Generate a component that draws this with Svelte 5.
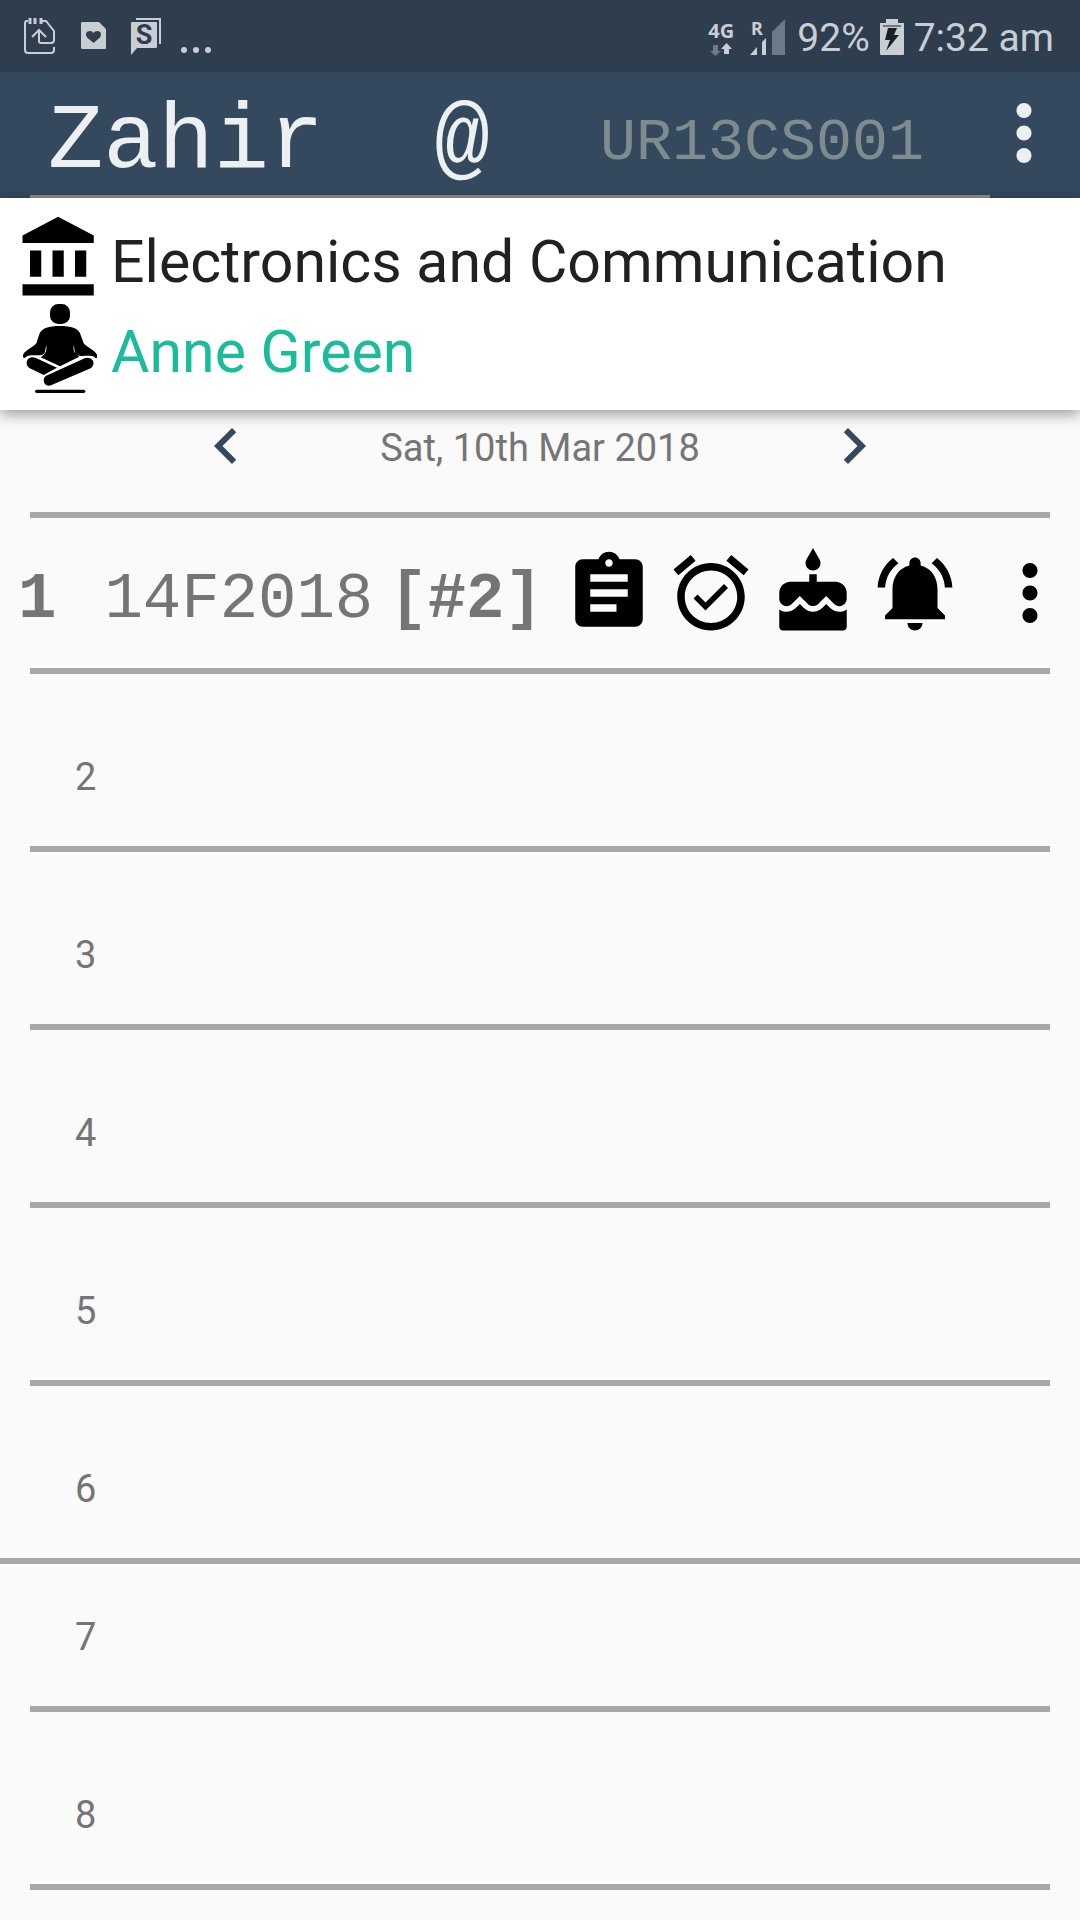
<script>
  const actions = [
    { label: 'Assignments', d: 'M19 3h-4.18C14.4 1.84 13.3 1 12 1c-1.3 0-2.4.84-2.82 2H5c-1.1 0-2 .9-2 2v14c0 1.1.9 2 2 2h14c1.1 0 2-.9 2-2V5c0-1.1-.9-2-2-2zm-7 0c.55 0 1 .45 1 1s-.45 1-1 1-1-.45-1-1 .45-1 1-1zm2 14H7v-2h7v2zm3-4H7v-2h10v2zm0-4H7V7h10v2z' },
    { label: 'Alarm', d: 'M22 5.72l-4.6-3.86-1.29 1.53 4.6 3.86L22 5.72zM7.88 3.39L6.6 1.86 2 5.71l1.29 1.53 4.59-3.85zM12 4c-4.97 0-9 4.03-9 9s4.02 9 9 9c4.97 0 9-4.03 9-9s-4.03-9-9-9zm0 16c-3.87 0-7-3.13-7-7s3.13-7 7-7 7 3.13 7 7-3.13 7-7 7zm-1.46-5.47L8.41 12.4l-1.06 1.06 3.18 3.18 6-6-1.06-1.06-4.93 4.95z' },
    { label: 'Birthdays', d: 'M12 6c1.11 0 2-.9 2-2 0-.38-.1-.73-.29-1.03L12 0l-1.71 2.97c-.19.3-.29.65-.29 1.03 0 1.1.9 2 2 2zm4.6 9.99l-1.07-1.07-1.08 1.07c-1.3 1.3-3.58 1.31-4.89 0l-1.07-1.07-1.09 1.07C6.75 16.64 5.88 17 4.96 17c-.73 0-1.4-.23-1.96-.61V21c0 .55.45 1 1 1h16c.55 0 1-.45 1-1v-4.61c-.56.38-1.23.61-1.96.61-.92 0-1.79-.36-2.44-1.01zM18 9h-5V7h-2v2H6c-1.66 0-3 1.34-3 3v1.54c0 1.08.88 1.96 1.96 1.96.52 0 1.02-.2 1.38-.57l2.14-2.13 2.13 2.13c.74.74 2.03.74 2.77 0l2.14-2.13 2.13 2.13c.37.37.86.57 1.38.57 1.08 0 1.96-.88 1.96-1.96V12C21 10.34 19.66 9 18 9z' },
    { label: 'Notifications', d: 'M7.58 4.08L6.15 2.65C3.75 4.48 2.17 7.3 2.03 10.5h2c.15-2.65 1.51-4.97 3.55-6.42zm12.39 6.42h2c-.15-3.2-1.73-6.02-4.12-7.85l-1.42 1.43c2.02 1.45 3.39 3.77 3.54 6.42zM18 11c0-3.07-1.64-5.64-4.5-6.32V4c0-.83-.67-1.5-1.5-1.5s-1.5.67-1.5 1.5v.68C7.63 5.36 6 7.92 6 11v5l-2 2v1h16v-1l-2-2v-5zm-6 11c.14 0 .27-.01.4-.04.65-.14 1.18-.58 1.44-1.18.1-.24.15-.5.15-.78h-4c.01 1.1.9 2 2.01 2z' }
  ];
  const periods = [2, 3, 4, 5, 6, 7, 8];
  const more = 'M12 8c1.1 0 2-.9 2-2s-.9-2-2-2-2 .9-2 2 .9 2 2 2zm0 2c-1.1 0-2 .9-2 2s.9 2 2 2 2-.9 2-2-.9-2-2-2zm0 6c-1.1 0-2 .9-2 2s.9 2 2 2 2-.9 2-2-.9-2-2-2z';
</script>

<div class="screen">
  <div class="status">
    <div class="notices">
      <svg class="glyph" viewBox="0 0 36 42" fill="none" stroke="currentColor" stroke-width="2">
        <path d="M6 5H5Q3 5 3 7V34Q3 37 6 37H29Q32 37 32 34V31M19 5H24L32 15V24Q32 27 29 27H19Q17 27 17 25V15M10 21L17 14L24 21" />
        <path d="M8 2V8M13 2V8M19 2V8" stroke-width="3" />
      </svg>
      <svg class="glyph" viewBox="0 0 36 42" fill="currentColor" fill-rule="evenodd">
        <path d="M8 6H24L31 13V32Q31 33 30 33H8Q6 33 6 32V7Q6 6 8 6ZM18.500 27L25 21.500Q28 15 22 15Q19.500 15 18.500 17Q17.500 15 15 15Q9 15 12 21.500Z" />
      </svg>
      <svg class="glyph" viewBox="0 0 36 42">
        <path d="M8 3H32V28" fill="none" stroke="currentColor" stroke-width="2" />
        <path d="M3 7Q3 6 4 6H28Q29 6 29 7V31Q29 32 28 32H9L3 39Z" fill="currentColor" />
        <text x="16" y="28" class="s-mark">S</text>
      </svg>
      <svg class="glyph" viewBox="0 0 36 42" fill="currentColor"><circle cx="3" cy="34" r="3" /><circle cx="15" cy="34" r="3" /><circle cx="27" cy="34" r="3" /></svg>
    </div>
    <div class="system">
      <div class="net">
        <span class="net-text">4G</span>
        <svg viewBox="0 0 28 14">
          <path d="M6 2H11V8H14L8.500 13L3 8H6Z" fill="#6c7a89" />
          <path d="M17 11V6H14L19.500 0L25 6H22V11Z" fill="currentColor" />
        </svg>
      </div>
      <svg class="signal" viewBox="0 0 38 42" fill="currentColor">
        <text x="2" y="18" class="r-text">R</text>
        <path d="M1 38L8 30V38ZM13 38V25L17 21V38Z" />
        <path d="M23 38V15L36 2V38Z" fill="#6c7a89" />
      </svg>
      <span>92%</span>
      <svg class="battery" viewBox="0 0 24 42">
        <path d="M6 2H18V6H24V37Q24 38 23 38H1Q0 38 0 37V6H6Z" fill="currentColor" />
        <path d="M3 9H21" stroke="#6c7a89" stroke-width="2" />
        <path d="M8 11H17L14 18H19L6 34L10 23H5Z" fill="#1c2126" />
      </svg>
      <span>7:32 am</span>
    </div>
  </div>

  <header>
    <div class="identity">
      <h1>Zahir</h1>
      <span class="at">@</span>
      <span class="code">UR13CS001</span>
    </div>
    <button class="icon-button" aria-label="More options"><svg viewBox="0 0 24 24"><path d={more} /></svg></button>
  </header>

  <section class="card">
    <div class="line">
      <svg viewBox="0 0 24 24"><path d="M4 10v7h3v-7H4zm6 0v7h3v-7h-3zM2 22h19v-3H2v3zm14-12v7h3v-7h-3zm-4.500-9L2 6v2h19V6l-9.500-5z" /></svg>
      <span>Electronics and Communication</span>
    </div>
    <div class="line teacher">
      <svg viewBox="45 309 270 270">
        <rect x="150" y="312" width="60" height="60" rx="25" />
        <path d="M179 378C215 378 233 384 240 400L251 430C259 441 280 447 291 464V473Q287 478 283 470C266 463 235 474 226 461L221 436C219 450 222 461 238 470L180 499L122 472C138 463 141 450 139 436L134 458C126 473 95 460 78 470Q73 477 69 471V464C80 447 101 441 109 430L119 400C127 384 145 378 179 378Z" />
        <path d="M106 473L171 503L131 525L88 504Q77 495 81 482Q88 468 106 473Z" />
        <path d="M137 528L254 475Q271 469 279 482Q284 495 272 505L153 556Q138 561 132 547Q129 535 137 528Z" />
        <rect x="105" y="569" width="151" height="10" rx="5" />
      </svg>
      <span>Anne Green</span>
    </div>
  </section>

  <nav class="day">
    <button class="chevron" aria-label="Previous day"><svg viewBox="0 0 24 24"><path d="M15.410 7.410L14 6l-6 6 6 6 1.410-1.410L10.830 12z" /></svg></button>
    <time datetime="2018-03-10">Sat, 10th Mar 2018</time>
    <button class="chevron" aria-label="Next day"><svg viewBox="0 0 24 24"><path d="M10 6L8.590 7.410 13.170 12l-4.580 4.590L10 18l6-6z" /></svg></button>
  </nav>

  <ol>
    <li class="current">
      <div class="entry">
        <b>1</b>
        <span class="course">14F2018</span>
        <b class="count">[#2]</b>
      </div>
      <div class="actions">
        {#each actions as a}
          <button class="icon-button" aria-label={a.label}><svg viewBox="0 0 24 24"><path d={a.d} /></svg></button>
        {/each}
      </div>
      <button class="icon-button row-more" aria-label="Period options"><svg viewBox="0 0 24 24"><path d={more} /></svg></button>
    </li>
    {#each periods as p}
      <li class="period" class:full={p === 6} class:short={p === 7}>{p}</li>
    {/each}
  </ol>
</div>

<style>
  :global(body) { background: #fafafa; }
  .screen { font-family: Roboto, sans-serif; font-size: 38px; line-height: 48px; color: #757575; }
  svg { display: block; flex: none; }
  button { border: 0; padding: 0; background: none; color: inherit; cursor: pointer; flex: none; }
  .icon-button, .icon-button svg { width: 90px; height: 90px; }
  .icon-button svg, .chevron svg { fill: currentColor; }

  .status { display: flex; justify-content: space-between; align-items: center; height: 72px; padding: 0 26px 0 22px; background: #2e3e4f; color: #c9ced3; }
  .notices { display: flex; gap: 17px; padding-top: 2px; }
  .glyph { width: 36px; height: 42px; }
  .system { display: flex; align-items: center; gap: 10px; padding-top: 4px; }
  .system span { font-size: 39px; }
  .net { display: flex; flex-direction: column; align-items: center; margin-right: 4px; }
  .net svg { width: 28px; height: 14px; }
  .system .net-text { font: 700 20px/24px "Noto Sans", sans-serif; }
  .signal { width: 38px; height: 42px; }
  .battery { width: 24px; height: 42px; }
  .s-mark { font: 700 27px Roboto, sans-serif; fill: #2e3e4f; text-anchor: middle; }
  .r-text { font: 700 18px "Noto Sans", sans-serif; }

  header { display: flex; justify-content: space-between; height: 126px; padding: 0 11px 0 30px; background: #34495e; color: #ecf0f1; }
  header .icon-button { margin-top: 16px; }
  .identity { display: flex; flex: 1; align-items: center; justify-content: space-between; box-sizing: border-box; max-width: 960px; margin-right: -11px; padding: 18px 66px 0 18px; border-bottom: 3px solid #8f8f8f; font-family: "Liberation Mono", monospace; }
  h1, .at { margin: 0; font-size: 92px; line-height: 100px; font-weight: 400; }
  .code { font-size: 60px; line-height: 72px; color: #7f8c8d; }

  .card { position: relative; padding: 15px 15px 17px; background: #fff; box-shadow: 0 4px 14px rgba(0, 0, 0, 0.4); font-size: 59px; line-height: 72px; color: #212121; }
  .line { display: flex; align-items: center; gap: 6px; height: 90px; }
  .line svg { width: 90px; height: 90px; fill: #000; }
  .line span { padding-top: 8px; }
  .teacher span { color: #1abc9c; }

  .day { display: flex; align-items: center; justify-content: space-between; height: 72px; padding: 0 190px 30px; }
  .day time { padding-top: 4px; }
  .chevron, .chevron svg { width: 72px; height: 72px; color: #34495e; }

  ol { list-style: none; margin: 0 30px; padding: 0; border-top: 6px solid #a8a8a8; }
  li { border-bottom: 6px solid #a8a8a8; }
  .current { display: flex; align-items: center; height: 150px; }
  .entry { display: flex; margin-left: -12px; padding-top: 14px; font-family: "Liberation Mono", monospace; font-size: 64px; line-height: 72px; }
  .course { margin-left: 48px; }
  .count { margin-left: 16px; }
  .actions { display: flex; gap: 12px; margin-left: auto; color: #000; }
  .row-more { margin: 0 -25px 0 25px; color: #000; }
  .period { padding: 79px 45px 45px; }
  .period.full { margin: 0 -30px; padding-left: 75px; }
  .period.short { padding-top: 49px; }
</style>
